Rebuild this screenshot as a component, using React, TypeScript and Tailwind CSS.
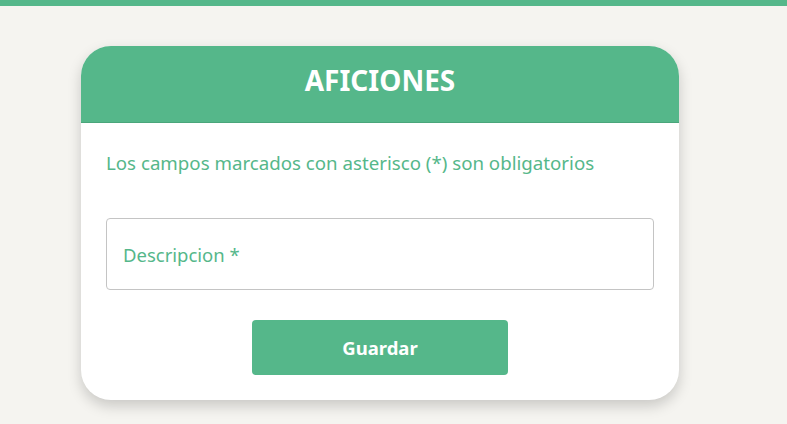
import React from "react";

export default function App() {
  return (
    <div
      className="min-h-[424px] w-full bg-[#f5f4f0]"
      style={{ fontFamily: '"Noto Sans", "Open Sans", sans-serif' }}
    >
      <div className="h-[6px] bg-[#55b78a]" />
      <div className="pl-[81px] pt-[40px]">
        <div className="w-[598px] overflow-hidden rounded-[30px] bg-white shadow-[0_6px_14px_rgba(0,0,0,0.18)]">
          <div className="flex h-[77px] items-center justify-center border-b border-[#4aa67b] bg-[#55b78a] pb-[8px]">
            <h1 className="text-[28px] font-bold text-white">AFICIONES</h1>
          </div>
          <div className="px-[25px] pt-[27px] pb-[25px]">
            <p className="text-[18.7px] leading-[26px] text-[#55b78a]">
              Los campos marcados con asterisco (*) son obligatorios
            </p>
            <input
              type="text"
              placeholder="Descripcion *"
              className="mt-[42px] block h-[72px] w-full rounded-[4px] border border-[#c4c4c4] px-[16px] text-[18.5px] text-[#55b78a] outline-none placeholder:text-[#55b78a]"
            />
            <div className="mt-[30px] flex justify-center">
              <button className="h-[55px] w-[256px] rounded-[4px] bg-[#55b78a] text-[18.5px] font-bold text-white">
                Guardar
              </button>
            </div>
          </div>
        </div>
      </div>
    </div>
  );
}
